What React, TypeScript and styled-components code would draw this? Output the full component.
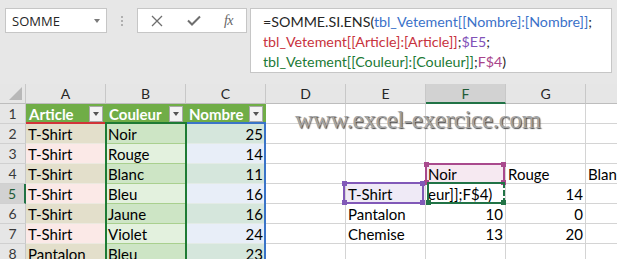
import React from "react";
import styled, { createGlobalStyle } from "styled-components";

const Global = createGlobalStyle`
  html, body { margin: 0; padding: 0; }
  body {
    width: 617px;
    height: 259px;
    overflow: hidden;
    background: #e7e7e7;
    font-family: Lato, "Liberation Sans", sans-serif;
  }
`;

const Window = styled.div`
  width: 617px;
  height: 259px;
  overflow: hidden;
  background: #e7e7e7;
  display: flex;
  flex-direction: column;
`;

const Toolbar = styled.div`
  height: 84px;
  flex: none;
  box-sizing: border-box;
  padding: 8px 0 0 5px;
  display: flex;
  align-items: flex-start;
`;

const NameBox = styled.div`
  width: 102px;
  height: 25px;
  box-sizing: border-box;
  border: 1px solid #c6c6c6;
  background: #fff;
  display: flex;
  align-items: center;
  justify-content: space-between;
  padding: 0 6px;
  font-family: "Open Sans", sans-serif;
  font-size: 13px;
  color: #262626;
`;

const Caret = styled.span`
  width: 0;
  height: 0;
  border-left: 3.5px solid transparent;
  border-right: 3.5px solid transparent;
  border-top: 4px solid #7a7a7a;
`;

const Grip = styled.div`
  width: 30px;
  height: 25px;
  display: flex;
  flex-direction: column;
  align-items: center;
  justify-content: center;
  gap: 2px;
`;

const GripDot = styled.span`
  width: 2px;
  height: 2px;
  background: #b0b0b0;
`;

const ButtonGroup = styled.div`
  width: 110px;
  height: 25px;
  box-sizing: border-box;
  border: 1px solid #c6c6c6;
  background: #fff;
  display: grid;
  grid-template-columns: 38px 35px 35px;
  align-items: center;
  justify-items: center;
`;

const Fx = styled.span`
  font-family: "Liberation Serif", serif;
  font-style: italic;
  font-size: 14px;
  color: #666;
  letter-spacing: -0.5px;
`;

const FormulaBox = styled.div`
  margin-left: 3px;
  width: 362px;
  height: 65px;
  box-sizing: border-box;
  border: 1px solid #c6c6c6;
  background: #fff;
  padding: 3px 0 0 12px;
  font-family: Lato, sans-serif;
  font-size: 14.25px;
  color: #262626;
`;

const FormulaLine = styled.div`
  height: 20px;
  line-height: 20px;
  white-space: nowrap;
`;

const Ref = styled.span<{ $c: string }>`
  color: ${(p) => p.$c};
`;

const Sheet = styled.div`
  position: relative;
  flex: 1;
  display: grid;
  grid-template-columns: 26px repeat(8, 80px);
  grid-auto-rows: 20px;
  background: #fff;
  font-family: Lato, sans-serif;
`;

const Corner = styled.div`
  background: #e6e6e6;
  border-right: 1px solid #c8c8c8;
  border-bottom: 1px solid #bdbdbd;
  box-sizing: border-box;
  display: flex;
  align-items: flex-end;
  justify-content: flex-end;
  padding: 0 3px 3px 0;
`;

const CornerTri = styled.span`
  width: 0;
  height: 0;
  border-left: 13px solid transparent;
  border-bottom: 13px solid #b8b8b8;
`;

const ColHead = styled.div<{ $sel?: boolean }>`
  box-sizing: border-box;
  background: ${(p) => (p.$sel ? "#d2d2d2" : "#e6e6e6")};
  border-right: 1px solid #c8c8c8;
  border-bottom: ${(p) => (p.$sel ? "2px solid #217346" : "1px solid #bdbdbd")};
  display: flex;
  align-items: center;
  justify-content: center;
  font-family: Lato, sans-serif;
  font-size: 14px;
  color: ${(p) => (p.$sel ? "#1e5b36" : "#262626")};
  padding-top: ${(p) => (p.$sel ? "1px" : "0")};
`;

const RowHead = styled.div<{ $sel?: boolean }>`
  box-sizing: border-box;
  background: ${(p) => (p.$sel ? "#d2d2d2" : "#e6e6e6")};
  border-right: ${(p) => (p.$sel ? "2px solid #217346" : "1px solid #c8c8c8")};
  border-bottom: 1px solid #d0d0d0;
  display: flex;
  align-items: center;
  justify-content: center;
  font-size: 14px;
  color: ${(p) => (p.$sel ? "#1e5b36" : "#3a3a3a")};
`;

const Cell = styled.div<{ $bg?: string; $num?: boolean; $line?: string }>`
  box-sizing: border-box;
  background: ${(p) => p.$bg || "#fff"};
  border-right: 1px solid #d4d4d4;
  border-bottom: 1px solid ${(p) => p.$line || "#d4d4d4"};
  display: flex;
  align-items: center;
  justify-content: ${(p) => (p.$num ? "flex-end" : "flex-start")};
  padding: 0 2px;
  font-size: 15px;
  color: #000;
  white-space: nowrap;
  overflow: hidden;
`;

const TableHead = styled.div`
  box-sizing: border-box;
  background: #70ad47;
  border-right: 1px solid #70ad47;
  display: flex;
  align-items: center;
  justify-content: space-between;
  padding: 0 2px 0 3px;
  font-size: 15px;
  font-weight: 700;
  color: #fff;
`;

const FilterBtn = styled.span`
  width: 14px;
  height: 16px;
  box-sizing: border-box;
  border: 1px solid #a9a9a9;
  background: #f3f3f3;
  display: flex;
  align-items: center;
  justify-content: center;
`;

const FilterTri = styled.span`
  width: 0;
  height: 0;
  border-left: 3.5px solid transparent;
  border-right: 3.5px solid transparent;
  border-top: 4px solid #555;
`;

const RangeLine = styled.div<{ $c: string; $l: number; $w: number; $t: number }>`
  position: absolute;
  left: ${(p) => p.$l}px;
  top: ${(p) => p.$t}px;
  width: ${(p) => p.$w}px;
  height: 2px;
  background: ${(p) => p.$c};
`;

const RangeBox = styled.div<{
  $c: string;
  $l: number;
  $t: number;
  $w: number;
  $h: number;
  $dashRight?: boolean;
}>`
  position: absolute;
  box-sizing: border-box;
  left: ${(p) => p.$l}px;
  top: ${(p) => p.$t}px;
  width: ${(p) => p.$w}px;
  height: ${(p) => p.$h}px;
  border: 2px solid ${(p) => p.$c};
  border-right-style: ${(p) => (p.$dashRight ? "dashed" : "solid")};
  pointer-events: none;
`;

const Handle = styled.span<{ $c: string; $pos: "tl" | "tr" | "bl" | "br" }>`
  position: absolute;
  width: 5px;
  height: 5px;
  background: ${(p) => p.$c};
  ${(p) => (p.$pos[0] === "t" ? "top: -3px;" : "bottom: -3px;")}
  ${(p) => (p.$pos[1] === "l" ? "left: -3px;" : "right: -3px;")}
`;

const Watermark = styled.div`
  position: absolute;
  left: 295px;
  top: 23px;
  font-family: "Liberation Serif", serif;
  font-size: 25px;
  line-height: 25px;
  letter-spacing: -0.3px;
  color: #a3a3a3;
  text-shadow: 1px 1px 1px #4a4a4a;
  white-space: nowrap;
  pointer-events: none;
`;

const XIcon = () => (
  <svg width="12" height="12" viewBox="0 0 12 12">
    <path d="M1 1 L11 11 M11 1 L1 11" stroke="#6e6e6e" strokeWidth="1.3" fill="none" />
  </svg>
);

const CheckIcon = () => (
  <svg width="14" height="11" viewBox="0 0 14 11">
    <path d="M1 5.5 L5 9.5 L13 1.5" stroke="#6e6e6e" strokeWidth="2" fill="none" />
  </svg>
);

const cols = ["A", "B", "C", "D", "E", "F", "G", "H"];

const tableRows = [
  ["T-Shirt", "Noir", "25"],
  ["T-Shirt", "Rouge", "14"],
  ["T-Shirt", "Blanc", "11"],
  ["T-Shirt", "Bleu", "16"],
  ["T-Shirt", "Jaune", "16"],
  ["T-Shirt", "Violet", "24"],
  ["Pantalon", "Bleu", "23"],
];

type Side = { t: string; num?: boolean; bg?: string };

const side: Record<number, Record<string, Side>> = {
  4: { F: { t: "Noir", bg: "#f6e9f1" }, G: { t: "Rouge" }, H: { t: "Blanc" } },
  5: { E: { t: "T-Shirt", bg: "#efeaf6" }, F: { t: "eur]];F$4)" }, G: { t: "14", num: true } },
  6: { E: { t: "Pantalon" }, F: { t: "10", num: true }, G: { t: "0", num: true } },
  7: { E: { t: "Chemise" }, F: { t: "13", num: true }, G: { t: "20", num: true } },
};

const bandBg = {
  A: ["#e3dfcb", "#fbe9e7"],
  B: ["#cde5c5", "#e3f1de"],
  C: ["#d5e6dc", "#e8eef8"],
};

export default function App() {
  const rows: React.ReactNode[] = [];
  for (let r = 1; r <= 8; r++) {
    rows.push(
      <RowHead key={`rh${r}`} $sel={r === 5}>
        {r}
      </RowHead>
    );
    if (r === 1) {
      ["Article", "Couleur", "Nombre"].forEach((h) =>
        rows.push(
          <TableHead key={`th${h}`}>
            {h}
            <FilterBtn>
              <FilterTri />
            </FilterBtn>
          </TableHead>
        )
      );
    } else {
      const d = tableRows[r - 2];
      const band = r % 2 === 0 ? 0 : 1;
      rows.push(
        <Cell key={`a${r}`} $bg={bandBg.A[band]} $line="#ece9e0">
          {d[0]}
        </Cell>
      );
      rows.push(
        <Cell key={`b${r}`} $bg={bandBg.B[band]} $line="#a9d08e">
          {d[1]}
        </Cell>
      );
      rows.push(
        <Cell key={`c${r}`} $bg={bandBg.C[band]} $line="#e3ebe6" $num>
          {d[2]}
        </Cell>
      );
    }
    ["D", "E", "F", "G", "H"].forEach((c) => {
      const s = side[r]?.[c];
      rows.push(
        <Cell key={`${c}${r}`} $bg={s?.bg} $num={s?.num}>
          {s?.t}
        </Cell>
      );
    });
  }

  return (
    <Window>
      <Global />
      <Toolbar>
        <NameBox>
          SOMME
          <Caret />
        </NameBox>
        <Grip>
          <GripDot />
          <GripDot />
          <GripDot />
        </Grip>
        <ButtonGroup>
          <XIcon />
          <CheckIcon />
          <Fx>fx</Fx>
        </ButtonGroup>
        <FormulaBox>
          <FormulaLine>
            =SOMME.SI.ENS(<Ref $c="#3b72c9">tbl_Vetement[[Nombre]:[Nombre]]</Ref>;
          </FormulaLine>
          <FormulaLine>
            <Ref $c="#c8333d">tbl_Vetement[[Article]:[Article]]</Ref>;
            <Ref $c="#8152b8">$E5</Ref>;
          </FormulaLine>
          <FormulaLine>
            <Ref $c="#1c7a36">tbl_Vetement[[Couleur]:[Couleur]]</Ref>;
            <Ref $c="#a8448a">F$4</Ref>)
          </FormulaLine>
        </FormulaBox>
      </Toolbar>
      <Sheet>
        <Corner>
          <CornerTri />
        </Corner>
        {cols.map((c) => (
          <ColHead key={c} $sel={c === "F"}>
            {c}
          </ColHead>
        ))}
        {rows}
        <RangeLine $c="#d13438" $l={26} $t={38} $w={80} />
        <RangeBox $c="#3a74c8" $l={185} $t={38} $w={81} $h={240} />
        <RangeBox $c="#1e7b34" $l={105} $t={38} $w={82} $h={240} />
        <RangeBox $c="#a94a8d" $l={425} $t={79} $w={80} $h={21}>
          <Handle $c="#a94a8d" $pos="tl" />
          <Handle $c="#a94a8d" $pos="tr" />
          <Handle $c="#a94a8d" $pos="bl" />
          <Handle $c="#a94a8d" $pos="br" />
        </RangeBox>
        <RangeBox $c="#8159b8" $l={343} $t={98} $w={81} $h={22}>
          <Handle $c="#8159b8" $pos="tl" />
          <Handle $c="#8159b8" $pos="tr" />
          <Handle $c="#8159b8" $pos="bl" />
          <Handle $c="#8159b8" $pos="br" />
        </RangeBox>
        <RangeBox $c="#217346" $l={427} $t={98} $w={78} $h={22} $dashRight>
          <Handle $c="#217346" $pos="bl" />
          <Handle $c="#217346" $pos="br" />
        </RangeBox>
        <Watermark>www.excel-exercice.com</Watermark>
      </Sheet>
    </Window>
  );
}
